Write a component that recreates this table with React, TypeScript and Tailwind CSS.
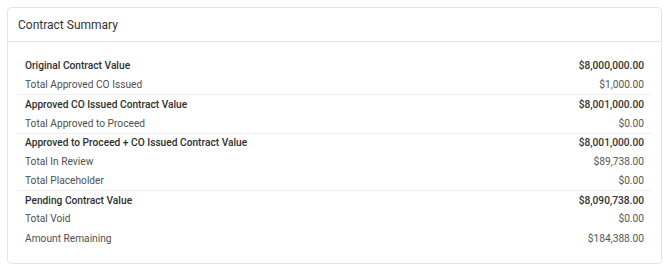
import React from "react";

type Row = { label: string; value: string; bold?: boolean; sep?: boolean };

const rows: Row[] = [
  { label: "Original Contract Value", value: "$8,000,000.00", bold: true },
  { label: "Total Approved CO Issued", value: "$1,000.00" },
  { label: "Approved CO Issued Contract Value", value: "$8,001,000.00", bold: true, sep: true },
  { label: "Total Approved to Proceed", value: "$0.00" },
  { label: "Approved to Proceed + CO Issued Contract Value", value: "$8,001,000.00", bold: true, sep: true },
  { label: "Total In Review", value: "$89,738.00" },
  { label: "Total Placeholder", value: "$0.00" },
  { label: "Pending Contract Value", value: "$8,090,738.00", bold: true, sep: true },
  { label: "Total Void", value: "$0.00" },
  { label: "Amount Remaining", value: "$184,388.00" },
];

export default function App() {
  return (
    <div
      className="bg-white pt-[7px] pl-[7px] pr-[8px] pb-[7px]"
      style={{ fontFamily: "Roboto, 'Liberation Sans', sans-serif" }}
    >
      <div className="border border-[#e4e4e4] rounded-[4px] bg-white">
        <div className="h-[34px] border-b border-[#e4e4e4] px-[10px] flex items-center text-[12px] text-[#333333]">
          Contract Summary
        </div>
        <div className="px-[9px] pt-[14px] pb-[15px]">
          {rows.map((r) => (
            <div
              key={r.label}
              className={
                "flex items-center justify-between h-[19.2px] px-[8px] text-[10.2px] " +
                (r.sep ? "border-t border-[#efefef] " : "") +
                (r.bold ? "font-medium text-[#2f2f2f]" : "text-[#4f4f4f]")
              }
            >
              <span>{r.label}</span>
              <span className={r.bold ? "text-[#333333]" : "text-[#555555]"}>{r.value}</span>
            </div>
          ))}
        </div>
      </div>
    </div>
  );
}
